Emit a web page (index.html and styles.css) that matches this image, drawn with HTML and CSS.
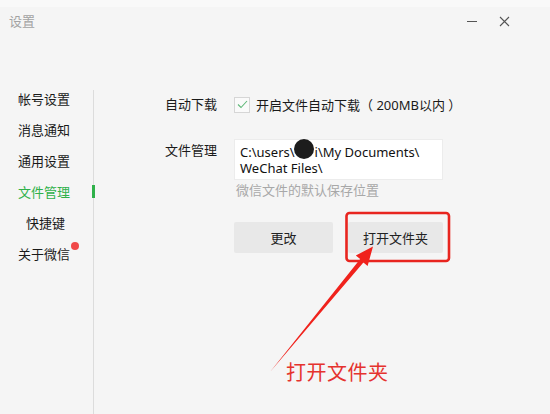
FILE: index.html
```html
<!DOCTYPE html>
<html lang="zh-CN">

<head>
  <meta charset="UTF-8">
  <meta name="viewport" content="width=device-width, initial-scale=1.0">
  <title>设置</title>
  <link rel="stylesheet" href="styles.css">
</head>

<body>
  <div class="window">
    <div class="titlebar">
      <span class="title">设置</span>
      <div class="controls">
        <span class="min"></span>
        <svg class="close" width="11" height="11" viewBox="0 0 11 11">
          <path d="M1 1 L10 10 M10 1 L1 10" stroke="#555" stroke-width="1.1" fill="none" />
        </svg>
      </div>
    </div>

    <div class="main">
      <ul class="sidebar">
        <li>帐号设置</li>
        <li>消息通知</li>
        <li>通用设置</li>
        <li class="active">文件管理</li>
        <li class="sub">快捷键</li>
        <li class="dot">关于微信</li>
      </ul>

      <div class="content">
        <div class="row download">
          <span class="label">自动下载</span>
          <span class="check">
            <svg width="11" height="9" viewBox="0 0 11 9">
              <path d="M1 4.5 L4 7.5 L10 1" stroke="#5fb878" stroke-width="1.1" fill="none" />
            </svg>
          </span>
          <span class="check-text">开启文件自动下载（ 200MB以内 ）</span>
        </div>

        <div class="row files">
          <span class="label">文件管理</span>
          <div class="path-col">
            <div class="path-box">
              <span class="path-line">C:\users\<span class="blur"></span>i\My Documents\</span>
              <span class="path-line">WeChat Files\</span>
            </div>
            <div class="hint">微信文件的默认保存位置</div>
            <div class="buttons">
              <button class="btn change">更改</button>
              <button class="btn open">打开文件夹</button>
            </div>
          </div>
        </div>
      </div>
    </div>
  </div>

  <svg class="annotation" width="550" height="414" viewBox="0 0 550 414">
    <rect x="346.5" y="213" width="102.5" height="48" rx="3" fill="none" stroke="#e8251f" stroke-width="2.6" />
    <polygon points="270,372 360.2,259 355.8,255.6 373,246.5 367.6,266 363.4,262.6" fill="#f0221c" />
  </svg>
  <div class="note">打开文件夹</div>
</body>

</html>
```

FILE: styles.css
```css
* {
  box-sizing: border-box;
}

body {
  margin: 0;
  width: 550px;
  height: 414px;
  overflow: hidden;
  background: #f5f5f5;
  font-family: "Noto Sans", "Noto Sans CJK SC", sans-serif;
  font-size: 13px;
  color: #1a1a1a;
  position: relative;
}

.window {
  height: 100%;
  border-top: 7px solid #f9f9f9;
  display: flex;
  flex-direction: column;
}

.titlebar {
  height: 83px;
  display: flex;
  justify-content: space-between;
  padding: 6px 0 0 9px;
}

.title {
  color: #a3a3a3;
  font-size: 13px;
  line-height: 16px;
}

.controls {
  display: flex;
  gap: 22px;
  padding: 3px 40px 0 0;
}

.min {
  width: 10px;
  height: 1px;
  margin-top: 5px;
  background: #555;
}

.main {
  flex: 1;
  display: flex;
}

.sidebar {
  list-style: none;
  margin: 0;
  padding: 0 0 0 18px;
  width: 94px;
  border-right: 1px solid #dcdcdc;
  display: flex;
  flex-direction: column;
  gap: 13px;
}

.sidebar li {
  line-height: 18px;
  position: relative;
}

.sidebar .active {
  color: #2fb14a;
}

.sidebar .active::after {
  content: "";
  position: absolute;
  right: -2px;
  top: 2px;
  width: 3px;
  height: 13px;
  background: #2fb14a;
}

.sidebar .sub {
  padding-left: 8px;
}

.sidebar .dot::after {
  content: "";
  position: absolute;
  left: 53px;
  top: -3px;
  width: 8px;
  height: 8px;
  border-radius: 50%;
  background: #f04848;
}

.content {
  padding: 7px 0 0 71px;
}

.row {
  display: flex;
}

.label {
  width: 69px;
  flex-shrink: 0;
  line-height: 15px;
}

.download {
  align-items: center;
  height: 15px;
}

.check {
  width: 16px;
  height: 16px;
  border: 1px solid #d6d6d6;
  background: #fafafa;
  display: flex;
  align-items: center;
  justify-content: center;
  margin-right: 6px;
}

.files {
  margin-top: 27px;
}

.files .label {
  margin-top: 4px;
}

.path-col {
  display: flex;
  flex-direction: column;
}

.path-box {
  width: 209px;
  height: 41px;
  background: #fff;
  border: 1px solid #ececec;
  padding: 4px 5px;
  display: flex;
  flex-direction: column;
  line-height: 16px;
  color: #111;
}

.blur {
  display: inline-block;
  width: 20px;
  height: 10px;
  position: relative;
}

.blur::after {
  content: "";
  position: absolute;
  left: -1px;
  top: -8px;
  width: 20px;
  height: 20px;
  border-radius: 50%;
  background: #1c1c1c;
}

.hint {
  margin-top: 2px;
  padding-left: 2px;
  color: #a8a8a8;
  line-height: 16px;
}

.buttons {
  display: flex;
  gap: 15px;
  margin-top: 24px;
}

.btn {
  height: 31px;
  border: none;
  border-radius: 2px;
  background: #e8e8e8;
  font-family: inherit;
  font-size: 13px;
  color: #222;
  padding: 0;
}

.change {
  width: 99px;
}

.open {
  width: 95px;
}

.annotation {
  position: absolute;
  left: 0;
  top: 0;
  pointer-events: none;
}

.note {
  position: absolute;
  left: 286px;
  top: 360px;
  font-size: 20px;
  line-height: 26px;
  color: #e5332e;
  letter-spacing: 0.5px;
}
```
